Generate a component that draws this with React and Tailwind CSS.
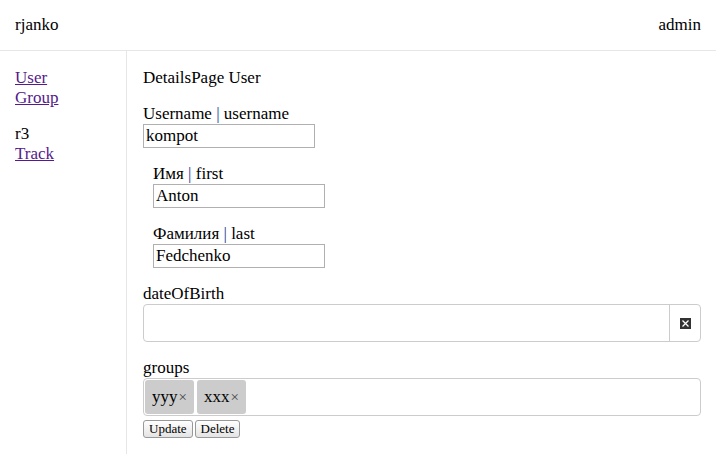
import React from 'react';

const serif = { fontFamily: '"Liberation Serif", serif' };

function Field({ label, name, value, indent }) {
  return (
    <div className={indent ? 'pl-[10px]' : ''}>
      <div className="leading-[20px]">
        {label} <span className="text-[#1a3790]">|</span> {name}
      </div>
      <input
        readOnly
        value={value}
        className="block w-[172px] h-[24px] border border-[#b0b0b0] px-[2px] text-[17px] leading-[20px] outline-none"
        style={serif}
      />
    </div>
  );
}

function Chip({ text }) {
  return (
    <div className="flex items-center h-[34px] px-[7px] bg-[#cccccc] rounded-[3px]">
      <span>{text}</span>
      <span className="text-[15px] text-[#444] ml-[1px]">×</span>
    </div>
  );
}

export default function App() {
  return (
    <div className="w-[716px] min-h-[466px] bg-white text-black text-[17px]" style={serif}>
      {/* Header */}
      <div className="flex items-center justify-between h-[51px] px-[15px] border-b border-[#e6e6e6]">
        <span>rjanko</span>
        <span>admin</span>
      </div>

      <div className="flex">
        {/* Sidebar */}
        <div className="w-[127px] shrink-0 border-r border-[#e6e6e6] pl-[15px] pt-[17px] leading-[20px]">
          <a href="#" className="block underline text-[#551a8b]">User</a>
          <a href="#" className="block underline text-[#551a8b]">Group</a>
          <div className="h-[16px]" />
          <div>r3</div>
          <a href="#" className="block underline text-[#551a8b]">Track</a>
        </div>

        {/* Main */}
        <div className="flex-1 pl-[16px] pr-[15px] pt-[17px] pb-[16px]">
          <div className="leading-[20px]">DetailsPage User</div>

          <div className="mt-[16px]">
            <Field label="Username" name="username" value="kompot" />
          </div>
          <div className="mt-[16px]">
            <Field label="Имя" name="first" value="Anton" indent />
          </div>
          <div className="mt-[16px]">
            <Field label="Фамилия" name="last" value="Fedchenko" indent />
          </div>

          <div className="mt-[16px]">
            <div className="leading-[20px]">dateOfBirth</div>
            <div className="flex h-[38px] border border-[#cccccc] rounded-[4px]">
              <div className="flex-1" />
              <div className="w-[31px] border-l border-[#cccccc] flex items-center justify-center">
                <svg width="11" height="11" viewBox="0 0 11 11">
                  <rect width="11" height="11" fill="#333" />
                  <path d="M2.5 2.5 L8.5 8.5 M8.5 2.5 L2.5 8.5" stroke="#fff" strokeWidth="1.3" />
                </svg>
              </div>
            </div>
          </div>

          <div className="mt-[16px]">
            <div className="leading-[20px]">groups</div>
            <div className="flex items-center gap-[3px] h-[38px] border border-[#cccccc] rounded-[4px] px-[1px]">
              <Chip text="yyy" />
              <Chip text="xxx" />
            </div>
          </div>

          <div className="flex gap-[2px] mt-[4px]">
            <button className="h-[18px] px-[5px] text-[13px] leading-[14px] border border-[#999] rounded-[3px] bg-gradient-to-b from-white to-[#e4e4e4]" style={serif}>
              Update
            </button>
            <button className="h-[18px] px-[5px] text-[13px] leading-[14px] border border-[#999] rounded-[3px] bg-gradient-to-b from-white to-[#e4e4e4]" style={serif}>
              Delete
            </button>
          </div>
        </div>
      </div>
    </div>
  );
}
